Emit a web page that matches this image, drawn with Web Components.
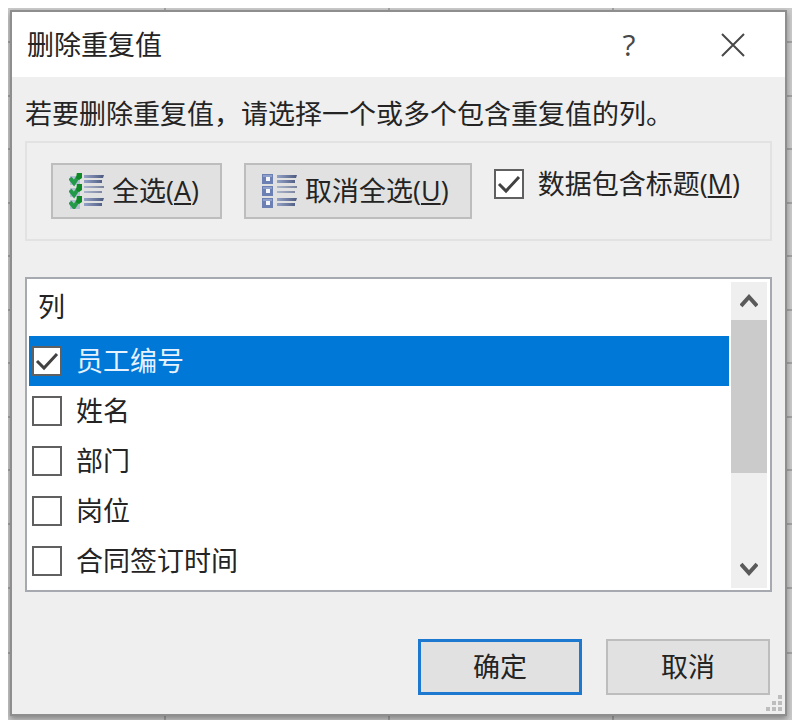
<!DOCTYPE html>
<html lang="zh-CN">
<head>
<meta charset="utf-8">
<meta name="viewport" content="width=device-width, initial-scale=1">
<title>删除重复值</title>
<style>
    body {
        margin: 8px;
        background: #fff;
        color: #242424;
        font: 27px/36px "Open Sans", "Noto Sans CJK SC", sans-serif;
    }
</style>
</head>
<body>

<sheet-backdrop>
    <dialog-window>
        <span slot="title">删除重复值</span>

        <dialog-message>若要删除重复值，请选择一个或多个包含重复值的列。</dialog-message>

        <option-group>
            <push-button>
                <list-icon slot="icon" checked></list-icon>全选(<u>A</u>)
            </push-button>
            <push-button>
                <list-icon slot="icon"></list-icon>取消全选(<u>U</u>)
            </push-button>
            <check-field checked>数据包含标题(<u>M</u>)</check-field>
        </option-group>

        <column-list>
            <span slot="heading">列</span>
            <check-field row selected checked>员工编号</check-field>
            <check-field row>姓名</check-field>
            <check-field row>部门</check-field>
            <check-field row>岗位</check-field>
            <check-field row>合同签订时间</check-field>
        </column-list>

        <push-button slot="actions" wide primary>确定</push-button>
        <push-button slot="actions" wide>取消</push-button>
    </dialog-window>
</sheet-backdrop>

<script>
    // Attaches an open shadow root and fills it from a template
    function render(host, html) {
        const template = document.createElement('template');
        template.innerHTML = html;
        host.attachShadow({ mode: 'open' });
        host.shadowRoot.appendChild(template.content.cloneNode(true));
    }

    // The dimmed worksheet with its grid lines
    class SheetBackdrop extends HTMLElement {
        constructor() {
            super();
            render(this, `
            <style>
            :host {
                display: block;
                padding: 2px 5px 4px 2px;
                background-color: #cbcbcb;
                --line: linear-gradient(#a4a4a4, #a4a4a4);
                background-image:
                    var(--line), var(--line),
                    repeating-linear-gradient(transparent 0 33px, #a4a4a4 33px 35px, transparent 35px 87px, #a4a4a4 87px 89px, transparent 89px 107px),
                    repeating-linear-gradient(90deg, transparent 0 156px, #a4a4a4 156px 158px, transparent 158px 224px);
                background-size: 100% 2px, 100% 2px, 100% 530px, 100% 100%;
                background-position: 0 579px, 0 644px, 0 0, 0 0;
                background-repeat: no-repeat;
            }
            </style>
            <slot></slot>
            `);
        }
    }

    class DialogWindow extends HTMLElement {
        constructor() {
            super();
            render(this, `
            <style>
            :host {
                display: block;
                position: relative;
                border: 2px solid #8e8e8e;
                background: #efefef;
                box-shadow: 0 3px 6px rgba(0, 0, 0, .35);
            }
            header {
                display: flex;
                align-items: center;
                height: 65px;
                padding-left: 15px;
                background: #fff;
            }
            h1 {
                flex: 1;
                margin: 0;
                font: inherit;
            }
            header button {
                display: flex;
                align-items: center;
                justify-content: center;
                width: 104px;
                height: 65px;
                padding: 0;
                border: 0;
                background: none;
                color: #484848;
                font: inherit;
                font-size: 30px;
            }
            main {
                padding: 19px 13px 0;
            }
            footer {
                display: flex;
                justify-content: flex-end;
                gap: 24px;
                padding: 47px 15px 19px;
            }
            .grip {
                position: absolute;
                right: 2px;
                bottom: 2px;
                fill: #bdbdbd;
            }
            </style>
            <header>
                <h1><slot name="title"></slot></h1>
                <button type="button" aria-label="帮助">?</button>
                <button type="button" aria-label="关闭">
                    <svg width="24" height="24" fill="none" stroke="#484848" stroke-width="2">
                        <path d="M1 1L23 23M23 1L1 23"/>
                    </svg>
                </button>
            </header>
            <main><slot></slot></main>
            <footer><slot name="actions"></slot></footer>
            <svg class="grip" width="17" height="17">
                <path d="M12 0h4v4h-4zM6 6h4v4H6zM12 6h4v4h-4zM0 12h4v4H0zM6 12h4v4H6zM12 12h4v4h-4z"/>
            </svg>
            `);
        }
    }

    class DialogMessage extends HTMLElement {
        constructor() {
            super();
            render(this, `
            <style>
            :host {
                display: block;
                margin-bottom: 9px;
            }
            </style>
            <slot></slot>
            `);
        }
    }

    class OptionGroup extends HTMLElement {
        constructor() {
            super();
            render(this, `
            <style>
            :host {
                display: flex;
                align-items: flex-start;
                gap: 22px;
                padding: 20px 24px;
                border: 2px solid #e2e2e2;
                margin-bottom: 36px;
            }
            </style>
            <slot></slot>
            `);
        }
    }

    class PushButton extends HTMLElement {
        constructor() {
            super();
            render(this, `
            <style>
            :host {
                display: block;
            }
            button {
                display: flex;
                align-items: center;
                gap: 7px;
                height: 56px;
                padding: 0 21px 0 16px;
                border: 2px solid #bdbdbd;
                background: #e1e1e1;
                color: inherit;
                font: inherit;
                white-space: nowrap;
            }
            :host([wide]) button {
                justify-content: center;
                width: 164px;
                padding: 0;
            }
            :host([primary]) button {
                border: 3px solid #1c79cf;
            }
            </style>
            <button type="button">
                <slot name="icon"></slot>
                <span><slot></slot></span>
            </button>
            `);
        }
    }

    // Three list entries, each led by a tick or by an empty box
    class ListIcon extends HTMLElement {
        constructor() {
            super();
            const tick = `
                <path fill="#b3bfd3" d="M1 3h10v9H1z"/>
                <path fill="none" stroke="#23994a" stroke-width="4" d="M1 5L5 10L9 4"/>
                <path fill="#0d8a26" d="M8 -1h5v6l-3 2l-3 -2z"/>`;
            const box = `
                <path fill="#6d80b3" d="M0 1h11v10H0z"/>
                <path fill="#8fa0ca" d="M1 2h9v2H1z"/>
                <path fill="#f4f6fb" d="M4 4h4v4H4z"/>`;
            const mark = this.hasAttribute('checked') ? tick : box;
            render(this, `
            <style>
            :host, svg {
                display: block;
            }
            </style>
            <svg width="36" height="36" viewBox="0 0 36 36">
                <defs>
                    <linearGradient id="bar">
                        <stop offset="0" stop-color="#93a2c6"/>
                        <stop offset="1" stop-color="#4d5a80"/>
                    </linearGradient>
                </defs>
                <g>${mark}</g>
                <g transform="translate(0 12)">${mark}</g>
                <g transform="translate(0 24)">${mark}</g>
                <g fill="url(#bar)">
                    <path d="M15 2h20l-1 3H15zM15 7h18v3H15zM15 25h20l-1 3H15zM15 30h18v3H15z"/>
                    <path opacity=".7" d="M15 13h20v2H15zM15 18h18v2H15z"/>
                </g>
            </svg>
            `);
        }
    }

    class CheckField extends HTMLElement {
        constructor() {
            super();
            render(this, `
            <style>
            :host {
                display: block;
            }
            label {
                display: flex;
                align-items: center;
                gap: 14px;
                height: 42px;
                white-space: nowrap;
            }
            :host([row]) label {
                height: 50px;
                padding-left: 3px;
            }
            :host([selected]) {
                background: #0078d7;
                color: #e6f2ff;
            }
            .box {
                display: grid;
                width: 30px;
                height: 30px;
            }
            input, svg {
                grid-area: 1 / 1;
            }
            input {
                appearance: none;
                box-sizing: border-box;
                width: 30px;
                height: 30px;
                margin: 0;
                border: 2px solid #606060;
                background: #fff;
            }
            svg {
                fill: none;
                stroke: #424242;
                stroke-width: 3;
                pointer-events: none;
                visibility: hidden;
            }
            input:checked + svg {
                visibility: visible;
            }
            </style>
            <label>
                <span class="box">
                    <input type="checkbox">
                    <svg width="30" height="30"><path d="M5 15L12 22L25 8"/></svg>
                </span>
                <span><slot></slot></span>
            </label>
            `);
            this.shadowRoot.querySelector('input').checked = this.hasAttribute('checked');
        }
    }

    class ScrollStrip extends HTMLElement {
        constructor() {
            super();
            render(this, `
            <style>
            :host {
                display: flex;
                flex-direction: column;
                background: #efefef;
            }
            button {
                display: flex;
                align-items: center;
                justify-content: center;
                height: 38px;
                padding: 0;
                border: 0;
                background: none;
            }
            svg {
                fill: none;
                stroke: #5a5a5a;
                stroke-width: 4;
            }
            .track {
                flex: 1;
            }
            .thumb {
                height: 66%;
                min-height: 153px;
                background: #cbcbcb;
            }
            </style>
            <button type="button" aria-label="向上">
                <svg width="18" height="14"><path d="M1 12L9 3L17 12"/></svg>
            </button>
            <div class="track"><div class="thumb"></div></div>
            <button type="button" aria-label="向下">
                <svg width="18" height="14"><path d="M1 2L9 11L17 2"/></svg>
            </button>
            `);
        }
    }

    class ColumnList extends HTMLElement {
        constructor() {
            super();
            render(this, `
            <style>
            :host {
                display: grid;
                grid-template-columns: 1fr 36px;
                gap: 2px;
                padding: 3px 3px 2px 2px;
                border: 2px solid #a6a9b0;
                background: #fff;
            }
            .heading {
                height: 54px;
                padding-left: 9px;
                line-height: 50px;
            }
            .rows {
                padding-bottom: 2px;
            }
            </style>
            <div class="rows">
                <div class="heading"><slot name="heading"></slot></div>
                <slot></slot>
            </div>
            <scroll-strip></scroll-strip>
            `);
        }
    }

    customElements.define('sheet-backdrop', SheetBackdrop);
    customElements.define('dialog-window', DialogWindow);
    customElements.define('dialog-message', DialogMessage);
    customElements.define('option-group', OptionGroup);
    customElements.define('push-button', PushButton);
    customElements.define('list-icon', ListIcon);
    customElements.define('check-field', CheckField);
    customElements.define('scroll-strip', ScrollStrip);
    customElements.define('column-list', ColumnList);
</script>
</body>
</html>
